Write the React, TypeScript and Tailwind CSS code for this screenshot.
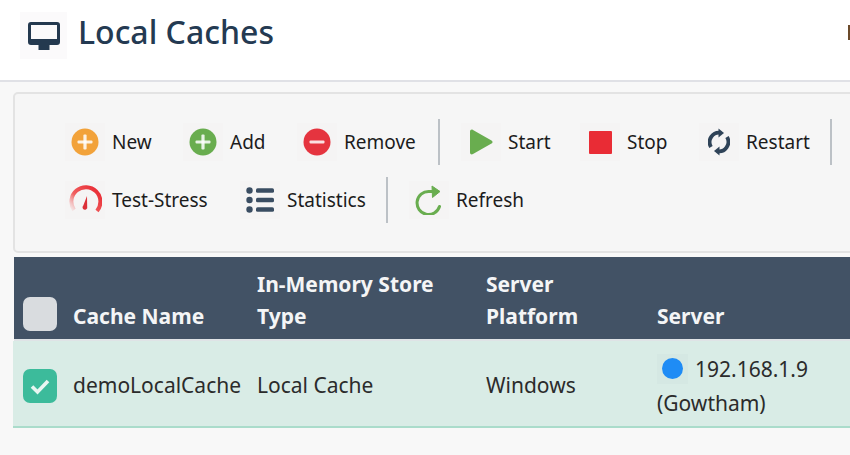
const font = { fontFamily: '"Noto Sans", sans-serif' };

function Circle({ color, kind }: { color: string; kind: "plus" | "minus" }) {
  return (
    <svg width="28" height="28" viewBox="0 0 28 28">
      <circle cx="14" cy="14" r="13.5" fill={color} />
      <rect x="6.5" y="12.4" width="15" height="3.2" rx="1" fill="#fff" fillOpacity="0.85" />
      {kind === "plus" ? <rect x="12.4" y="6.5" width="3.2" height="15" rx="1" fill="#fff" fillOpacity="0.85" /> : null}
    </svg>
  );
}

function Play() {
  return (
    <svg width="24" height="26" viewBox="0 0 24 26">
      <path d="M1 2.5C1 .8 2.6 0 4 .9L22.5 11.4c1.4.8 1.4 2.4 0 3.2L4 25.1C2.6 26 1 25.2 1 23.5z" fill="#69ad4f" />
    </svg>
  );
}

function Stop() {
  return <div className="h-[23px] w-[23px] rounded-[1px] bg-[#e92c35]" />;
}

function RestartIcon() {
  return (
    <svg width="22" height="28" viewBox="0 0 22 28" fill="none">
      <path d="M3 19A9.5 9.5 0 0 1 13 4.8" stroke="#2f4358" strokeWidth="3.8" />
      <path d="M10.5 0.5 16 5l-5.5 4.5z" fill="#2f4358" />
      <path d="M19 9A9.5 9.5 0 0 1 9 23.2" stroke="#2f4358" strokeWidth="3.8" />
      <path d="M11.5 18.5 6 23l5.5 4.5z" fill="#2f4358" />
    </svg>
  );
}

function Gauge() {
  return (
    <svg width="34" height="30" viewBox="0 0 34 30" fill="none">
      <defs>
        <linearGradient id="gaugeFade" x1="0" y1="1" x2="1" y2="0.2">
          <stop offset="0" stopColor="#f3a3a3" stopOpacity="0.1" />
          <stop offset="0.4" stopColor="#f06060" />
          <stop offset="1" stopColor="#e92c35" />
        </linearGradient>
      </defs>
      <path d="M6 25A14.5 14.5 0 1 1 29 26" stroke="url(#gaugeFade)" strokeWidth="4" />
      <path d="M19 11 19.2 21.5a2.4 2.4 0 1 1-3.9-1z" fill="#dc3038" />
    </svg>
  );
}

function ListIcon() {
  return (
    <svg width="28" height="28" viewBox="0 0 28 28" fill="#3a4d62">
      <circle cx="3.5" cy="4.5" r="3.2" />
      <circle cx="3.5" cy="14" r="3.2" />
      <circle cx="3.5" cy="23.5" r="3.2" />
      <rect x="10" y="2.2" width="18" height="4.6" rx="1.6" />
      <rect x="10" y="11.7" width="18" height="4.6" rx="1.6" />
      <rect x="10" y="21.2" width="18" height="4.6" rx="1.6" />
    </svg>
  );
}

function RefreshIcon() {
  return (
    <svg width="28" height="30" viewBox="0 0 28 30" fill="none">
      <path d="M24.5 21.5A11.5 11.5 0 1 1 14 6.5h5" stroke="#69ad4f" strokeWidth="3" strokeLinecap="round" />
      <path d="M17 1 25 6.5 17.5 12.5z" fill="#69ad4f" stroke="#69ad4f" strokeLinejoin="round" />
    </svg>
  );
}

function Tool({ icon, label, cls }: { icon: React.ReactNode; label: string; cls: string }) {
  return (
    <div className={`flex h-[38px] items-center ${cls}`}>
      <span className="flex h-[38px] w-[40px] shrink-0 items-center justify-center bg-[#f5f4f4]">{icon}</span>
      <span className="ml-[7px] text-[19px] leading-[26px] whitespace-nowrap text-[#1c1c1c]">{label}</span>
    </div>
  );
}

function Sep({ cls }: { cls: string }) {
  return <div className={`h-[46px] w-[2px] shrink-0 bg-[#bcc1c6] ${cls}`} />;
}

export default function App() {
  return (
    <div className="flex h-[455px] w-[850px] flex-col overflow-hidden bg-[#f8f8f8]" style={font}>
      <header className="flex h-[82px] shrink-0 items-start border-b-2 border-[#e0e1e6] bg-white pl-[20px] pt-[12px]">
        <span className="flex h-[47px] w-[47px] shrink-0 items-center justify-center bg-[#fbfafb]">
          <svg width="32" height="28" viewBox="0 0 32 28">
            <path d="M3 0h26a3 3 0 0 1 3 3v17a3 3 0 0 1-3 3H3a3 3 0 0 1-3-3V3a3 3 0 0 1 3-3zm0 3v14h26V3z" fill="#24394f" fillRule="evenodd" />
            <rect x="10.5" y="23" width="11" height="5" fill="#24394f" />
          </svg>
        </span>
        <h1 className="mt-[-1px] ml-[11px] text-[32px] leading-[42px] font-medium text-[#243a52]">Local Caches</h1>
        <span className="mt-[13px] ml-auto h-[15px] w-[2px] bg-[#6b4a2a]" />
      </header>

      <div className="mt-[10px] ml-[13px] h-[161px] w-[900px] shrink-0 rounded-[5px] border-2 border-[#e3e3e3] bg-[#f6f6f6] pt-[25px] pl-[50px]">
        <div className="flex items-center">
          <Tool icon={<Circle color="#f2a23a" kind="plus" />} label="New" cls="w-[118px]" />
          <Tool icon={<Circle color="#69ad4f" kind="plus" />} label="Add" cls="w-[114px]" />
          <Tool icon={<Circle color="#e5343f" kind="minus" />} label="Remove" cls="w-[141px]" />
          <Sep cls="mr-[21px]" />
          <Tool icon={<Play />} label="Start" cls="w-[119px]" />
          <Tool icon={<Stop />} label="Stop" cls="w-[119px]" />
          <Tool icon={<RestartIcon />} label="Restart" cls="w-[131px]" />
          <Sep cls="" />
        </div>
        <div className="mt-[12px] flex items-center">
          <Tool icon={<Gauge />} label="Test-Stress" cls="w-[175px]" />
          <Tool icon={<ListIcon />} label="Statistics" cls="w-[146px]" />
          <Sep cls="mr-[21px]" />
          <Tool icon={<RefreshIcon />} label="Refresh" cls="w-[120px]" />
        </div>
      </div>

      <div className="mt-[4px] ml-[14px] flex h-[84px] w-[836px] shrink-0 items-end border-b-2 border-[#dfe3e6] bg-[#425265] pb-[7px] text-[21px] leading-[32px] font-bold text-[#f4f5f6]">
        <div className="mr-[16px] mb-[1px] ml-[9px] h-[34px] w-[34px] rounded-[7px] bg-[#d9dcdf]" />
        <div className="w-[184px]">Cache Name</div>
        <div className="w-[229px]">
          In-Memory Store
          <br />
          Type
        </div>
        <div className="w-[171px]">
          Server
          <br />
          Platform
        </div>
        <div>Server</div>
      </div>

      <div className="ml-[13px] flex h-[87px] w-[837px] shrink-0 items-center border-b-2 border-[#aadccb] bg-[#d9ece6] pt-[4px] text-[21px] text-[#2b2b2b]">
        <div className="mr-[16px] ml-[10px] flex h-[34px] w-[34px] items-center justify-center rounded-[7px] bg-[#3cbb9b]">
          <svg width="22" height="18" viewBox="0 0 22 18" fill="none">
            <path d="M3 9.5 8.5 15 19 4" stroke="#e8f6f2" strokeWidth="3.6" />
          </svg>
        </div>
        <div className="w-[184px]">demoLocalCache</div>
        <div className="w-[229px]">Local Cache</div>
        <div className="w-[171px]">Windows</div>
        <div className="leading-[34px]">
          <div className="flex items-center">
            <span className="flex h-[30px] w-[31px] items-center justify-center bg-[#d5e8e3]">
              <span className="h-[21px] w-[21px] rounded-full bg-[#1f8cf5]" />
            </span>
            <span className="ml-[7px]">192.168.1.9</span>
          </div>
          <div>(Gowtham)</div>
        </div>
      </div>
    </div>
  );
}
